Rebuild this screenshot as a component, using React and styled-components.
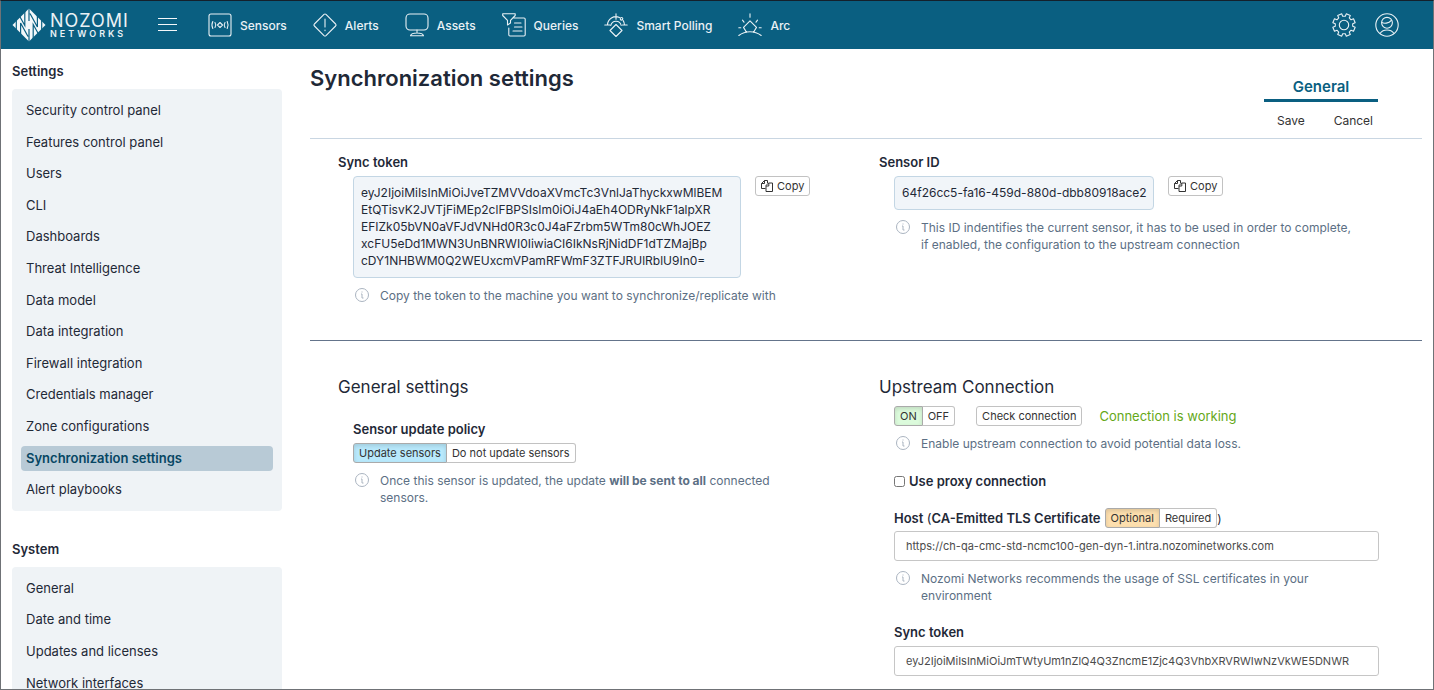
import React from "react";
import styled, { createGlobalStyle, css } from "styled-components";

const GlobalStyle = createGlobalStyle`
  *, *::before, *::after { box-sizing: border-box; }
  body {
    margin: 0;
    background: #fff;
    color: #1f2937;
    font-family: Inter, "Liberation Sans", sans-serif;
    font-size: 12px;
    line-height: 17px;
  }
  button, input { font: inherit; color: inherit; }
  a { color: inherit; text-decoration: none; }
  h1, h2, h3, p, ul { margin: 0; padding: 0; }
`;

const Shell = styled.div`
  display: flex;
  flex-direction: column;
  height: 100vh;
  overflow: hidden;
  border: 1px solid #6f7276;
  border-top-color: #14202b;
`;

const TopBar = styled.header`
  display: flex;
  align-items: center;
  flex: none;
  height: 48px;
  padding: 0 34px 0 11px;
  background: #0a5f81;
  color: #e9f1f5;
`;

const Brand = styled.a`
  display: flex;
  align-items: center;
  gap: 4px;
  width: 120px;
`;

const Wordmark = styled.span`
  display: flex;
  flex-direction: column;
`;

const BrandName = styled.span`
  font-size: 18px;
  line-height: 17px;
  letter-spacing: 1px;
`;

const BrandSub = styled.span`
  font-size: 9px;
  line-height: 9px;
  font-weight: 600;
  letter-spacing: 3px;
`;

const IconButton = styled.button`
  display: flex;
  padding: 0;
  border: 0;
  background: none;
  cursor: pointer;
`;

const MenuButton = styled(IconButton)`
  margin: 0 30px 0 26px;
`;

const MainNav = styled.nav`
  display: flex;
  flex: 1;
  gap: 26px;
`;

const NavLink = styled.a`
  display: flex;
  align-items: center;
  gap: 8px;
  font-size: 12px;
  font-weight: 500;
  white-space: nowrap;
`;

const TopActions = styled.div`
  display: flex;
  gap: 19px;
`;

const Body = styled.div`
  display: flex;
  flex: 1;
  min-height: 0;
  gap: 28px;
  padding: 0 11px;
`;

const Sidebar = styled.aside`
  flex: none;
  width: 270px;
  overflow: hidden;
  padding-top: 14px;
`;

const SideGroup = styled.section`
  margin-bottom: 30px;
`;

const SideTitle = styled.h2`
  margin-bottom: 9px;
  font-size: 13px;
  line-height: 17px;
  font-weight: 600;
`;

const SideList = styled.ul`
  display: flex;
  flex-direction: column;
  gap: 6px;
  padding: 9px 9px 8px;
  border-radius: 4px;
  background: #eff3f6;
  list-style: none;
`;

const SideLink = styled.a`
  display: block;
  padding: 5px;
  border-radius: 4px;
  font-size: 13px;
  line-height: 1.2;
  ${(p) =>
    p.$current &&
    css`
      background: #b8cad6;
      color: #064663;
      font-weight: 600;
    `}
`;

const Main = styled.main`
  flex: 1;
  min-width: 0;
`;

const PageHead = styled.div`
  display: flex;
  justify-content: space-between;
  height: 90px;
  padding: 16px 44px 0 0;
  border-bottom: 1px solid #c9d6e2;
`;

const PageTitle = styled.h1`
  font-size: 22px;
  line-height: 26px;
  font-weight: 600;
`;

const HeadActions = styled.div`
  display: flex;
  flex-direction: column;
  width: 114px;
  padding-top: 12px;
`;

const Tab = styled.a`
  padding-bottom: 3px;
  border-bottom: 3px solid #0a5f81;
  color: #0a5f81;
  font-size: 15px;
  line-height: 19px;
  font-weight: 600;
  text-align: center;
`;

const ActionRow = styled.div`
  display: flex;
  justify-content: space-between;
  padding: 10px 5px 0 13px;
`;

const TextButton = styled.button`
  padding: 0;
  border: 0;
  background: none;
  color: #333;
  font-size: 12px;
  line-height: 17px;
  cursor: pointer;
`;

const Section = styled.section`
  display: grid;
  grid-template-columns: 1fr 1fr;
  padding: 0 2px 0 28px;
`;

const TokenSection = styled(Section)`
  padding-top: 15px;
  padding-bottom: 36px;
  border-bottom: 1px solid #64748b;
`;

const SettingsSection = styled(Section)`
  padding-top: 36px;
`;

const Column = styled.div`
  min-width: 0;
`;

const Heading = styled.h2`
  font-size: 17px;
  line-height: 20px;
  font-weight: 400;
`;

const FieldLabel = styled.div`
  font-size: 13px;
  line-height: 17px;
  font-weight: 600;
`;

const Indent = styled.div`
  padding: 0 41px 0 15px;
`;

const CodeRow = styled.div`
  display: flex;
  align-items: flex-start;
  gap: 14px;
  margin-top: 5px;
`;

const CodeBox = styled.output`
  padding: 7px 7px 8px;
  width: ${(p) => (p.$wide ? "388px" : "260px")};
  border: 1px solid #c3d6e4;
  border-radius: 4px;
  background: #f1f5f9;
  font-size: 12px;
  white-space: pre;
`;

const Button = styled.button`
  display: flex;
  align-items: center;
  gap: 4px;
  height: 20px;
  padding: 0 5px 1px;
  border: 1px solid #c2c2c2;
  border-radius: 3px;
  background: ${(p) => p.$fill || "#fff"};
  color: #333;
  font-size: 11px;
  line-height: 16px;
  white-space: nowrap;
  cursor: pointer;
  ${(p) => p.$fill && css`
    border-color: #aaa;
    box-shadow: inset 0 2px 4px rgba(0, 0, 0, 0.13);
  `}
`;

const ButtonGroup = styled.span`
  display: inline-flex;
  ${Button}:first-child { border-radius: 3px 0 0 3px; }
  ${Button}:last-child { border-radius: 0 3px 3px 0; border-left: 0; }
`;

const HintRow = styled.div`
  display: flex;
  align-items: flex-start;
  gap: 11px;
  margin-top: 9px;
  padding-left: 2px;
  color: #5c6f84;
  font-size: 12px;
  line-height: 17px;
  svg { flex: none; margin-top: 1px; }
  p { max-width: 436px; }
`;

const Policy = styled.div`
  display: flex;
  flex-direction: column;
  gap: 5px;
  padding-top: 24px;
`;

const StatusRow = styled.div`
  display: flex;
  align-items: center;
  margin-top: 9px;
`;

const CheckButton = styled(Button)`
  margin: 0 17px 0 21px;
`;

const Status = styled.span`
  color: #65a818;
  font-size: 13px;
`;

const CheckLabel = styled.label`
  display: flex;
  align-items: center;
  gap: 4px;
  margin-top: 21px;
  font-size: 13px;
  font-weight: 600;
  input { width: 11px; height: 11px; margin: 0; }
`;

const HostRow = styled.div`
  display: flex;
  align-items: center;
  height: 20px;
  margin: 18px 0 3px;
  white-space: nowrap;
`;

const HostLabel = styled.label`
  margin-right: 4px;
  font-size: 13px;
  font-weight: 600;
`;

const Thin = styled.span`
  font-weight: 400;
`;

const TextInput = styled.input`
  display: block;
  width: 100%;
  height: 30px;
  padding: 0 11px;
  border: 1px solid #c6c6c6;
  border-radius: 3px;
  background: #fff;
  color: #4b4b4b;
  font-size: 11px;
`;

const TokenField = styled.div`
  margin-top: 20px;
  ${TextInput} { margin-top: 5px; }
`;

const Svg = ({ size = 24, children, ...rest }) => (
  <svg width={size} height={size} viewBox="0 0 24 24" fill="none" stroke="currentColor"
    strokeWidth="1.1" strokeLinecap="round" strokeLinejoin="round" aria-hidden="true" {...rest}>
    {children}
  </svg>
);

const LogoMark = () => (
  <svg width="34" height="34" viewBox="0 0 34 34" aria-hidden="true">
    <path fill="#f4f8fa" d="M17 .5 33.500 17 17 33.500.5 17Z" />
    <g fill="none" stroke="#0a5f81" strokeWidth="1.200">
      <path d="M4.300 11v12M8.600 32V15L16 28.500M12.800 2v15.500L7.500 8M17 0v13M17 21v13M21.200 32V16.500L26.500 26M25.400 2v17L18 5.500M29.700 11v12" />
    </g>
  </svg>
);

const SensorsIcon = () => (
  <Svg>
    <rect x="1" y="1" width="22" height="22" rx="2" />
    <path d="m12 9.500 2.500 2.500-2.500 2.500L9.500 12ZM7 9.500c1 1.500 1 3.500 0 5M17 9.500c-1 1.500-1 3.500 0 5M4.800 8.500c-1 2-1 5 0 7M19.200 8.500c1 2 1 5 0 7" />
  </Svg>
);

const AlertsIcon = () => (
  <Svg>
    <path d="M11 1.400a1.500 1.500 0 0 1 2 0L22.600 11a1.500 1.500 0 0 1 0 2L13 22.600a1.500 1.500 0 0 1-2 0L1.400 13a1.500 1.500 0 0 1 0-2ZM12 6v8M12 17v.6" />
  </Svg>
);

const AssetsIcon = () => (
  <Svg>
    <rect x="1" y="1" width="22" height="16" rx="4" />
    <path d="M12 17v2.500M5.500 22.800c.5-2 3-2.800 6.500-2.800s6 .8 6.500 2.800Z" />
  </Svg>
);

const QueriesIcon = () => (
  <Svg>
    <path d="M.7.8h12.500v1.700L8.500 7.300V10l-3 2V7.300L.7 2.500ZM12 5h10a1.200 1.200 0 0 1 1.200 1.200v15.600A1.200 1.200 0 0 1 22 23H8a1.200 1.200 0 0 1-1.200-1.200V15M12.500 10H19M12.500 14H20M11 18h9" />
  </Svg>
);

const PollingIcon = () => (
  <Svg>
    <path d="m12 11.500 6 6-6 6-6-6ZM12 .8v5.500M.8 12H6M18.500 12h4.700M3.500 12a8.500 8.500 0 0 1 12-7.600M19.200 7.600a8.500 8.500 0 0 1 1.300 4.400M6.800 12.500a5.300 5.300 0 0 1 10.400 0" />
    <circle cx="17.500" cy="5.800" r="1.300" />
  </Svg>
);

const ArcIcon = () => (
  <Svg>
    <path d="M8.500 19.300 5.500 14.400 12 7.800l6.500 6.600-3 4.900M.8 22.500c6.500-5 15.900-5 22.400 0M12 .8v3.500M4.500 7.200l1.500 2M19.500 7.200l-1.500 2M.8 14.700h2M21.200 14.700h2" />
  </Svg>
);

const gearPath = () => {
  const points = [];
  for (let i = 0; i < 8; i += 1) {
    [[-14, 8.8], [-11, 11.4], [11, 11.4], [14, 8.8]].forEach(([deg, r]) => {
      const a = ((i * 45 + 22.5 + deg) * Math.PI) / 180;
      points.push(`${(12 + r * Math.cos(a)).toFixed(2)} ${(12 + r * Math.sin(a)).toFixed(2)}`);
    });
  }
  return `M${points.join("L")}Z`;
};

const GearIcon = () => (
  <Svg>
    <path d={gearPath()} />
    <circle cx="12" cy="12" r="4.700" />
  </Svg>
);

const UserIcon = () => (
  <Svg>
    <circle cx="12" cy="12" r="11.200" />
    <circle cx="12" cy="9.800" r="5.400" />
    <path d="M6.800 9.400c2 1.300 7 1.200 9.500-2M5.200 20.200c3-4.200 10.600-4.200 13.600 0" />
  </Svg>
);

const MenuIcon = () => (
  <svg width="20" height="14" viewBox="0 0 20 14" stroke="#f4f8fa" aria-hidden="true">
    <path d="M0 .5h19M0 6.500h19M0 12.500h19" />
  </svg>
);

const CopyIcon = () => (
  <svg width="12" height="12" viewBox="0 0 12 12" fill="none" stroke="#333" aria-hidden="true">
    <path d="M4.500 8.500h-4v-5l3-3h3v2.500M3.500.5v3h-3M5 5.500l2.500-2.500h4v8.500h-6.500ZM7.800 3v3H5" />
  </svg>
);

const InfoIcon = () => (
  <svg width="14" height="14" viewBox="0 0 14 14" fill="none" stroke="#aab4c0" aria-hidden="true">
    <circle cx="7" cy="7" r="6.500" />
    <path d="M7 3.500v1M6 6h1v4h1.500" />
  </svg>
);

const Hint = ({ children }) => (
  <HintRow>
    <InfoIcon />
    <p>{children}</p>
  </HintRow>
);

const CopyButton = () => (
  <Button type="button">
    <CopyIcon />
    Copy
  </Button>
);

const NAV = [
  ["Sensors", SensorsIcon],
  ["Alerts", AlertsIcon],
  ["Assets", AssetsIcon],
  ["Queries", QueriesIcon],
  ["Smart Polling", PollingIcon],
  ["Arc", ArcIcon],
];

const SIDE = [
  {
    title: "Settings",
    items: [
      "Security control panel", "Features control panel", "Users", "CLI", "Dashboards",
      "Threat Intelligence", "Data model", "Data integration", "Firewall integration",
      "Credentials manager", "Zone configurations", "Synchronization settings", "Alert playbooks",
    ],
  },
  {
    title: "System",
    items: ["General", "Date and time", "Updates and licenses", "Network interfaces"],
  },
];

const SYNC_TOKEN = [
  "eyJ2IjoiMiIsInMiOiJveTZMVVdoaXVmcTc3VnlJaThyckxwMlBEM",
  "EtQTisvK2JVTjFiMEp2clFBPSIsIm0iOiJ4aEh4ODRyNkF1alpXR",
  "EFIZk05bVN0aVFJdVNHd0R3c0J4aFZrbm5WTm80cWhJOEZ",
  "xcFU5eDd1MWN3UnBNRWI0IiwiaCI6IkNsRjNidDF1dTZMajBp",
  "cDY1NHBWM0Q2WEUxcmVPamRFWmF3ZTFJRUlRblU9In0=",
].join("\n");

export default function App() {
  return (
    <Shell>
      <GlobalStyle />
      <TopBar>
        <Brand href="#home">
          <LogoMark />
          <Wordmark>
            <BrandName>NOZOMI</BrandName>
            <BrandSub>NETWORKS</BrandSub>
          </Wordmark>
        </Brand>
        <MenuButton type="button" aria-label="Menu"><MenuIcon /></MenuButton>
        <MainNav>
          {NAV.map(([label, Icon]) => (
            <NavLink key={label} href="#nav"><Icon />{label}</NavLink>
          ))}
        </MainNav>
        <TopActions>
          <IconButton type="button" aria-label="Administration"><GearIcon /></IconButton>
          <IconButton type="button" aria-label="Profile"><UserIcon /></IconButton>
        </TopActions>
      </TopBar>
      <Body>
        <Sidebar>
          {SIDE.map((group) => (
            <SideGroup key={group.title}>
              <SideTitle>{group.title}</SideTitle>
              <SideList>
                {group.items.map((item) => (
                  <li key={item}>
                    <SideLink href="#settings" $current={item === "Synchronization settings"}>{item}</SideLink>
                  </li>
                ))}
              </SideList>
            </SideGroup>
          ))}
        </Sidebar>
        <Main>
          <PageHead>
            <PageTitle>Synchronization settings</PageTitle>
            <HeadActions>
              <Tab href="#general">General</Tab>
              <ActionRow>
                <TextButton type="button">Save</TextButton>
                <TextButton type="button">Cancel</TextButton>
              </ActionRow>
            </HeadActions>
          </PageHead>
          <TokenSection>
            <Column>
              <FieldLabel as="label" htmlFor="own-token">Sync token</FieldLabel>
              <Indent>
                <CodeRow>
                  <CodeBox id="own-token" $wide>{SYNC_TOKEN}</CodeBox>
                  <CopyButton />
                </CodeRow>
                <Hint>Copy the token to the machine you want to synchronize/replicate with</Hint>
              </Indent>
            </Column>
            <Column>
              <FieldLabel as="label" htmlFor="sensor-id">Sensor ID</FieldLabel>
              <Indent>
                <CodeRow>
                  <CodeBox id="sensor-id">64f26cc5-fa16-459d-880d-dbb80918ace2</CodeBox>
                  <CopyButton />
                </CodeRow>
                <Hint>
                  This ID indentifies the current sensor, it has to be used in order to complete,
                  if enabled, the configuration to the upstream connection
                </Hint>
              </Indent>
            </Column>
          </TokenSection>
          <SettingsSection>
            <Column>
              <Heading>General settings</Heading>
              <Indent>
                <Policy>
                  <FieldLabel>Sensor update policy</FieldLabel>
                  <ButtonGroup role="group" aria-label="Sensor update policy">
                    <Button type="button" $fill="#b8e9fc">Update sensors</Button>
                    <Button type="button">Do not update sensors</Button>
                  </ButtonGroup>
                </Policy>
                <Hint>
                  Once this sensor is updated, the update <b>will be sent to all</b> connected sensors.
                </Hint>
              </Indent>
            </Column>
            <Column>
              <Heading>Upstream Connection</Heading>
              <Indent>
                <StatusRow>
                  <ButtonGroup>
                    <Button type="button" $fill="#dcfbdc">ON</Button>
                    <Button type="button">OFF</Button>
                  </ButtonGroup>
                  <CheckButton type="button">Check connection</CheckButton>
                  <Status>Connection is working</Status>
                </StatusRow>
                <Hint>Enable upstream connection to avoid potential data loss.</Hint>
                <CheckLabel>
                  <input type="checkbox" />
                  Use proxy connection
                </CheckLabel>
                <HostRow>
                  <HostLabel htmlFor="host">
                    Host <Thin>(</Thin>CA-Emitted TLS Certificate
                  </HostLabel>
                  <ButtonGroup>
                    <Button type="button" $fill="#fddfae">Optional</Button>
                    <Button type="button">Required</Button>
                  </ButtonGroup>
                  )
                </HostRow>
                <TextInput id="host" defaultValue="https://ch-qa-cmc-std-ncmc100-gen-dyn-1.intra.nozominetworks.com" />
                <Hint>Nozomi Networks recommends the usage of SSL certificates in your environment</Hint>
                <TokenField>
                  <FieldLabel as="label" htmlFor="token">Sync token</FieldLabel>
                  <TextInput id="token" defaultValue="eyJ2IjoiMiIsInMiOiJmTWtyUm1nZlQ4Q3ZncmE1Zjc4Q3VhbXRVRWIwNzVkWE5DNWR" />
                </TokenField>
              </Indent>
            </Column>
          </SettingsSection>
        </Main>
      </Body>
    </Shell>
  );
}
